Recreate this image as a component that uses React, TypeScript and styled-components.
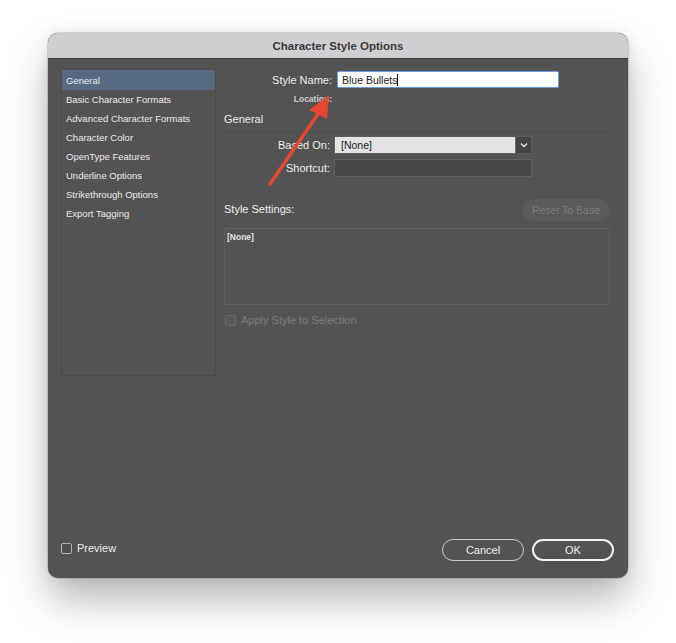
import styled, { createGlobalStyle } from 'styled-components'

const GlobalStyle = createGlobalStyle`
  html, body {
    margin: 0;
    padding: 0;
    background: #ffffff;
  }
  body {
    font-family: "Liberation Sans", Arial, sans-serif;
  }
`

const sections = [
  'General',
  'Basic Character Formats',
  'Advanced Character Formats',
  'Character Color',
  'OpenType Features',
  'Underline Options',
  'Strikethrough Options',
  'Export Tagging',
]

export default function App() {
  return (
    <>
      <GlobalStyle />
      <Page>
        <Dialog>
          <TitleBar>Character Style Options</TitleBar>
          <Body>
            <Main>
              <Sidebar>
                {sections.map((s, i) => (
                  <NavItem key={s} $active={i === 0}>{s}</NavItem>
                ))}
              </Sidebar>
              <Content>
                <NameRow>
                  <Label>Style Name:</Label>
                  <NameInput>Blue Bullets<Caret /></NameInput>
                </NameRow>
                <LocationRow>
                  <SmallLabel>Location:</SmallLabel>
                </LocationRow>
                <SectionTitle>General</SectionTitle>
                <Divider />
                <FieldRow>
                  <FieldLabel>Based On:</FieldLabel>
                  <Select>
                    <SelectValue>[None]</SelectValue>
                    <SelectButton>
                      <svg width="8" height="6" viewBox="0 0 8 6">
                        <path d="M1 1.5 L4 4.5 L7 1.5" fill="none" stroke="#e8e8e8" strokeWidth="1.4" />
                      </svg>
                    </SelectButton>
                  </Select>
                </FieldRow>
                <FieldRow $gap={5}>
                  <FieldLabel>Shortcut:</FieldLabel>
                  <DarkInput />
                </FieldRow>
                <SettingsHeader>
                  <HeaderText>Style Settings:</HeaderText>
                  <GhostButton>Reset To Base</GhostButton>
                </SettingsHeader>
                <SettingsBox>[None]</SettingsBox>
                <CheckRow $disabled>
                  <CheckBox $disabled />
                  <span>Apply Style to Selection</span>
                </CheckRow>
              </Content>
            </Main>
            <Footer>
              <CheckRow>
                <CheckBox />
                <span>Preview</span>
              </CheckRow>
              <Buttons>
                <PillButton>Cancel</PillButton>
                <PillButton $primary>OK</PillButton>
              </Buttons>
            </Footer>
          </Body>
          <ArrowLayer width="580" height="545" viewBox="0 0 580 545">
            <line x1="222" y1="151" x2="272" y2="78" stroke="#e6472f" strokeWidth="3.5" strokeLinecap="round" />
            <polygon points="281,62 261,77 279,86" fill="#e6472f" />
          </ArrowLayer>
        </Dialog>
      </Page>
    </>
  )
}

const Page = styled.div`
  display: flex;
  justify-content: center;
  padding-top: 33px;
  height: 643px;
  box-sizing: border-box;
`

const Dialog = styled.div`
  position: relative;
  width: 580px;
  height: 545px;
  border-radius: 10px;
  overflow: hidden;
  background: #535353;
  display: flex;
  flex-direction: column;
  box-shadow: 0 22px 40px rgba(0, 0, 0, 0.28), 0 0 14px rgba(0, 0, 0, 0.08), 0 0 0 0.5px rgba(0, 0, 0, 0.25);
`

const TitleBar = styled.div`
  height: 25px;
  flex: none;
  background: #cfcfd2;
  border-bottom: 1px solid #3c3c3c;
  display: flex;
  align-items: center;
  justify-content: center;
  font-size: 11.5px;
  font-weight: bold;
  color: #3b3b3b;
`

const Body = styled.div`
  flex: 1;
  display: flex;
  flex-direction: column;
  justify-content: space-between;
  padding: 10px 14px 17px 13px;
`

const Main = styled.div`
  display: flex;
  gap: 8px;
`

const Sidebar = styled.div`
  width: 153px;
  height: 305px;
  border: 1px solid #4b4b4b;
  display: flex;
  flex-direction: column;
`

const NavItem = styled.div<{ $active?: boolean }>`
  height: 19px;
  display: flex;
  align-items: center;
  padding-left: 4px;
  font-size: 9.5px;
  color: #ececec;
  background: ${p => (p.$active ? '#566a82' : 'transparent')};
  &:first-child {
    height: 20px;
  }
`

const Content = styled.div`
  flex: 1;
  padding-right: 4px;
  display: flex;
  flex-direction: column;
`

const NameRow = styled.div`
  display: flex;
  align-items: center;
  margin-top: 1px;
  height: 19px;
`

const Label = styled.div`
  width: 108px;
  text-align: right;
  font-size: 11px;
  color: #efefef;
`

const NameInput = styled.div`
  margin-left: 5px;
  width: 216px;
  height: 15px;
  background: #ffffff;
  border: 1.5px solid #6b9be0;
  border-radius: 2px;
  display: flex;
  align-items: center;
  padding-left: 4px;
  font-size: 10.5px;
  color: #222;
`

const Caret = styled.span`
  display: inline-block;
  width: 1px;
  height: 12px;
  background: #111;
`

const LocationRow = styled.div`
  display: flex;
  height: 12px;
  margin-top: 5px;
`

const SmallLabel = styled.div`
  width: 108px;
  text-align: right;
  font-size: 8.5px;
  font-weight: bold;
  color: #cfcfcf;
`

const SectionTitle = styled.div`
  margin-top: 7px;
  font-size: 11px;
  color: #efefef;
  height: 13px;
`

const Divider = styled.div`
  margin-top: 5px;
  height: 1px;
  background: #4c4c4c;
`

const FieldRow = styled.div<{ $gap?: number }>`
  display: flex;
  align-items: center;
  margin-top: ${p => p.$gap ?? 4}px;
  height: 18px;
`

const FieldLabel = styled.div`
  width: 106px;
  text-align: right;
  font-size: 11px;
  color: #efefef;
  padding-right: 4px;
`

const Select = styled.div`
  width: 198px;
  height: 18px;
  display: flex;
  border: 1px solid #5f5f5f;
  box-sizing: border-box;
`

const SelectValue = styled.div`
  flex: 1;
  background: #e4e4e4;
  display: flex;
  align-items: center;
  padding-left: 6px;
  font-size: 10.5px;
  color: #222;
`

const SelectButton = styled.div`
  width: 15px;
  background: #444444;
  border-left: 1px solid #6a6a6a;
  display: flex;
  align-items: center;
  justify-content: center;
`

const DarkInput = styled.div`
  width: 198px;
  height: 18px;
  box-sizing: border-box;
  background: #464646;
  border: 1px solid #626262;
`

const SettingsHeader = styled.div`
  display: flex;
  align-items: center;
  justify-content: space-between;
  margin-top: 21px;
  height: 22px;
`

const HeaderText = styled.div`
  font-size: 11px;
  color: #efefef;
`

const GhostButton = styled.div`
  width: 88px;
  height: 22px;
  border-radius: 11px;
  background: #5a5a5a;
  color: #7e7e7e;
  font-size: 10.5px;
  display: flex;
  align-items: center;
  justify-content: center;
  margin-top: 2px;
`

const SettingsBox = styled.div`
  margin-top: 8px;
  height: 77px;
  box-sizing: border-box;
  border: 1px solid #5f5f5f;
  padding: 3px 2px;
  font-size: 8.5px;
  font-weight: bold;
  color: #e3e3e3;
`

const CheckRow = styled.div<{ $disabled?: boolean }>`
  display: flex;
  align-items: center;
  gap: 5px;
  font-size: 11px;
  color: ${p => (p.$disabled ? '#7d7d7d' : '#ececec')};
  ${p => (p.$disabled ? 'margin-top: 9px; padding-left: 1px;' : 'margin-top: 2px;')}
`

const CheckBox = styled.span<{ $disabled?: boolean }>`
  width: 9px;
  height: 9px;
  border: 1px solid ${p => (p.$disabled ? '#6a6a6a' : '#b5b5b5')};
  border-radius: 2px;
  background: ${p => (p.$disabled ? '#585858' : '#4e4e4e')};
`

const Footer = styled.div`
  display: flex;
  justify-content: space-between;
  align-items: center;
`

const Buttons = styled.div`
  display: flex;
  gap: 8px;
  margin-top: 6px;
`

const PillButton = styled.div<{ $primary?: boolean }>`
  width: ${p => (p.$primary ? 78 : 80)}px;
  height: ${p => (p.$primary ? 18 : 20)}px;
  border: ${p => (p.$primary ? '2px solid #f2f2f2' : '1px solid #c8c8c8')};
  border-radius: 11px;
  display: flex;
  align-items: center;
  justify-content: center;
  font-size: 11px;
  color: #f0f0f0;
`

const ArrowLayer = styled.svg`
  position: absolute;
  left: 0;
  top: 0;
  pointer-events: none;
`
